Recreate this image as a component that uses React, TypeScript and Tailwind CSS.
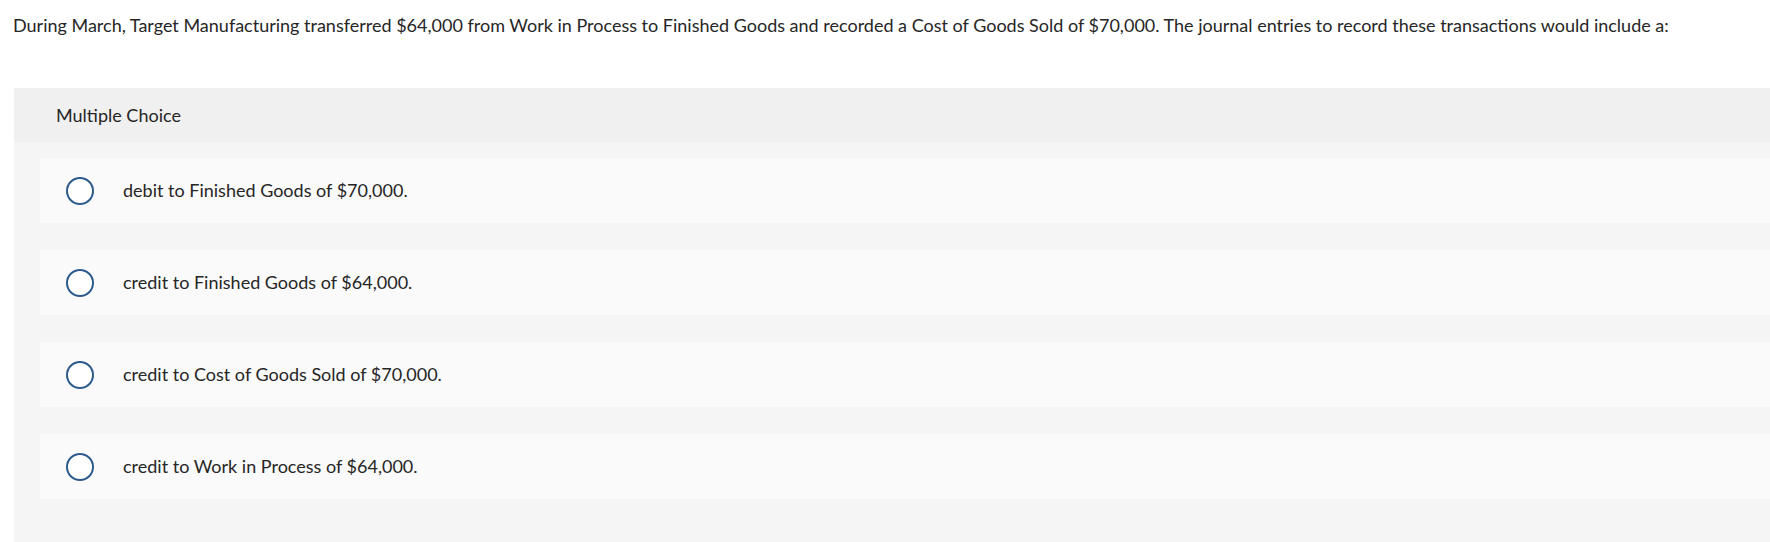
import React from 'react'

const choices = [
  'debit to Finished Goods of $70,000.',
  'credit to Finished Goods of $64,000.',
  'credit to Cost of Goods Sold of $70,000.',
  'credit to Work in Process of $64,000.',
]

export default function App() {
  return (
    <div className="min-h-screen bg-white font-['Lato','Liberation_Sans',sans-serif] text-[#262626]">
      <p className="pl-[13px] pt-[14px] text-[18px] leading-[22px]">
        During March, Target Manufacturing transferred $64,000 from Work in Process to Finished Goods and recorded a Cost of Goods Sold of $70,000. The journal entries to record these transactions would include a:
      </p>

      <div className="ml-[14px] mt-[52px] bg-[#f5f5f5]">
        <div className="h-[54px] bg-[#f0f0f0] pl-[42px] flex items-center text-[18px]">Multiple Choice</div>
        <div className="pt-[16px] pl-[26px] flex flex-col gap-[27px] pb-[60px]">
          {choices.map((c) => (
            <div key={c} className="h-[65px] bg-[#fafafa] flex items-center">
              <span className="ml-[26px] w-[28px] h-[28px] rounded-full border-2 border-[#2d5a8c] bg-white shrink-0" />
              <span className="ml-[29px] text-[18px]">{c}</span>
            </div>
          ))}
        </div>
      </div>
    </div>
  )
}
